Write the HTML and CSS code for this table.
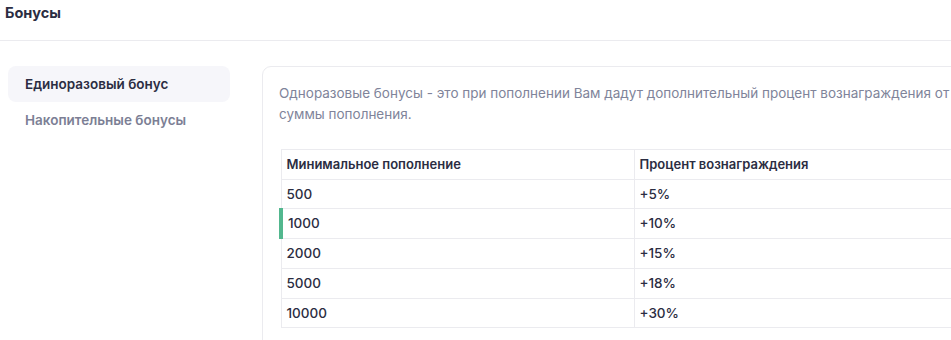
FILE: index.html
```
<!DOCTYPE html>
<html lang="ru">
<head>
<meta charset="utf-8">
<title>Бонусы</title>
<link rel="stylesheet" href="styles.css">
</head>
<body>
<header class="topbar">
  <h1 class="title">Бонусы</h1>
</header>
<main class="layout">
  <nav class="side">
    <a class="side-item active">Единоразовый бонус</a>
    <a class="side-item">Накопительные бонусы</a>
  </nav>
  <section class="card">
    <p class="desc">Одноразовые бонусы - это при пополнении Вам дадут дополнительный процент вознаграждения от суммы пополнения.</p>
    <table class="bonus">
      <thead>
        <tr><th class="c1">Минимальное пополнение</th><th>Процент вознаграждения</th></tr>
      </thead>
      <tbody>
        <tr><td>500</td><td>+5%</td></tr>
        <tr><td class="mark">1000</td><td>+10%</td></tr>
        <tr><td>2000</td><td>+15%</td></tr>
        <tr><td>5000</td><td>+18%</td></tr>
        <tr><td>10000</td><td>+30%</td></tr>
      </tbody>
    </table>
  </section>
</main>
</body>
</html>
```
FILE: styles.css
```
html, body {
  margin: 0;
  padding: 0;
  background: #ffffff;
  overflow: hidden;
}
body {
  font-family: Inter, "Noto Sans", sans-serif;
  color: #2b2d42;
  width: 951px;
  height: 340px;
}
.topbar {
  height: 40px;
  border-bottom: 1px solid #ebebef;
  display: flex;
  align-items: center;
  padding-left: 5px;
}
.title {
  margin: 0;
  font-size: 14.5px;
  font-weight: 700;
  color: #2b2d42;
  line-height: 20px;
  position: relative;
  top: -7px;
}
.layout {
  display: flex;
  align-items: flex-start;
  padding: 25px 0 0 8px;
  gap: 32px;
}
.side {
  width: 222px;
  flex: none;
  display: flex;
  flex-direction: column;
}
.side-item {
  display: block;
  height: 36px;
  line-height: 36px;
  padding-left: 17px;
  font-size: 13.5px;
  font-weight: 600;
  color: #7c7f95;
  border-radius: 8px;
}
.side-item.active {
  background: #f6f6fa;
  color: #2b2d42;
}
.card {
  flex: none;
  width: 760px;
  height: 300px;
  border: 1px solid #ebebef;
  border-radius: 9px;
  padding: 16px 16px 0 16px;
  box-sizing: border-box;
}
.desc {
  margin: 0;
  width: 690px;
  font-size: 13.5px;
  line-height: 21px;
  color: #80849a;
}
.bonus {
  margin-top: 24px;
  border-collapse: collapse;
  width: 720px;
  font-size: 13px;
  color: #2b2d42;
}
.bonus th, .bonus td {
  border: 1px solid #ebebef;
  text-align: left;
  padding: 6px 6px 6px 5px;
  line-height: 16.7px;
  height: 16.7px;
}
.bonus th {
  font-weight: 600;
}
.bonus td {
  font-size: 13.5px;
  font-weight: 500;
}
.bonus .c1 {
  width: 341px;
}
.bonus td.mark {
  border-left: 4px solid #52b78e;
}
```
